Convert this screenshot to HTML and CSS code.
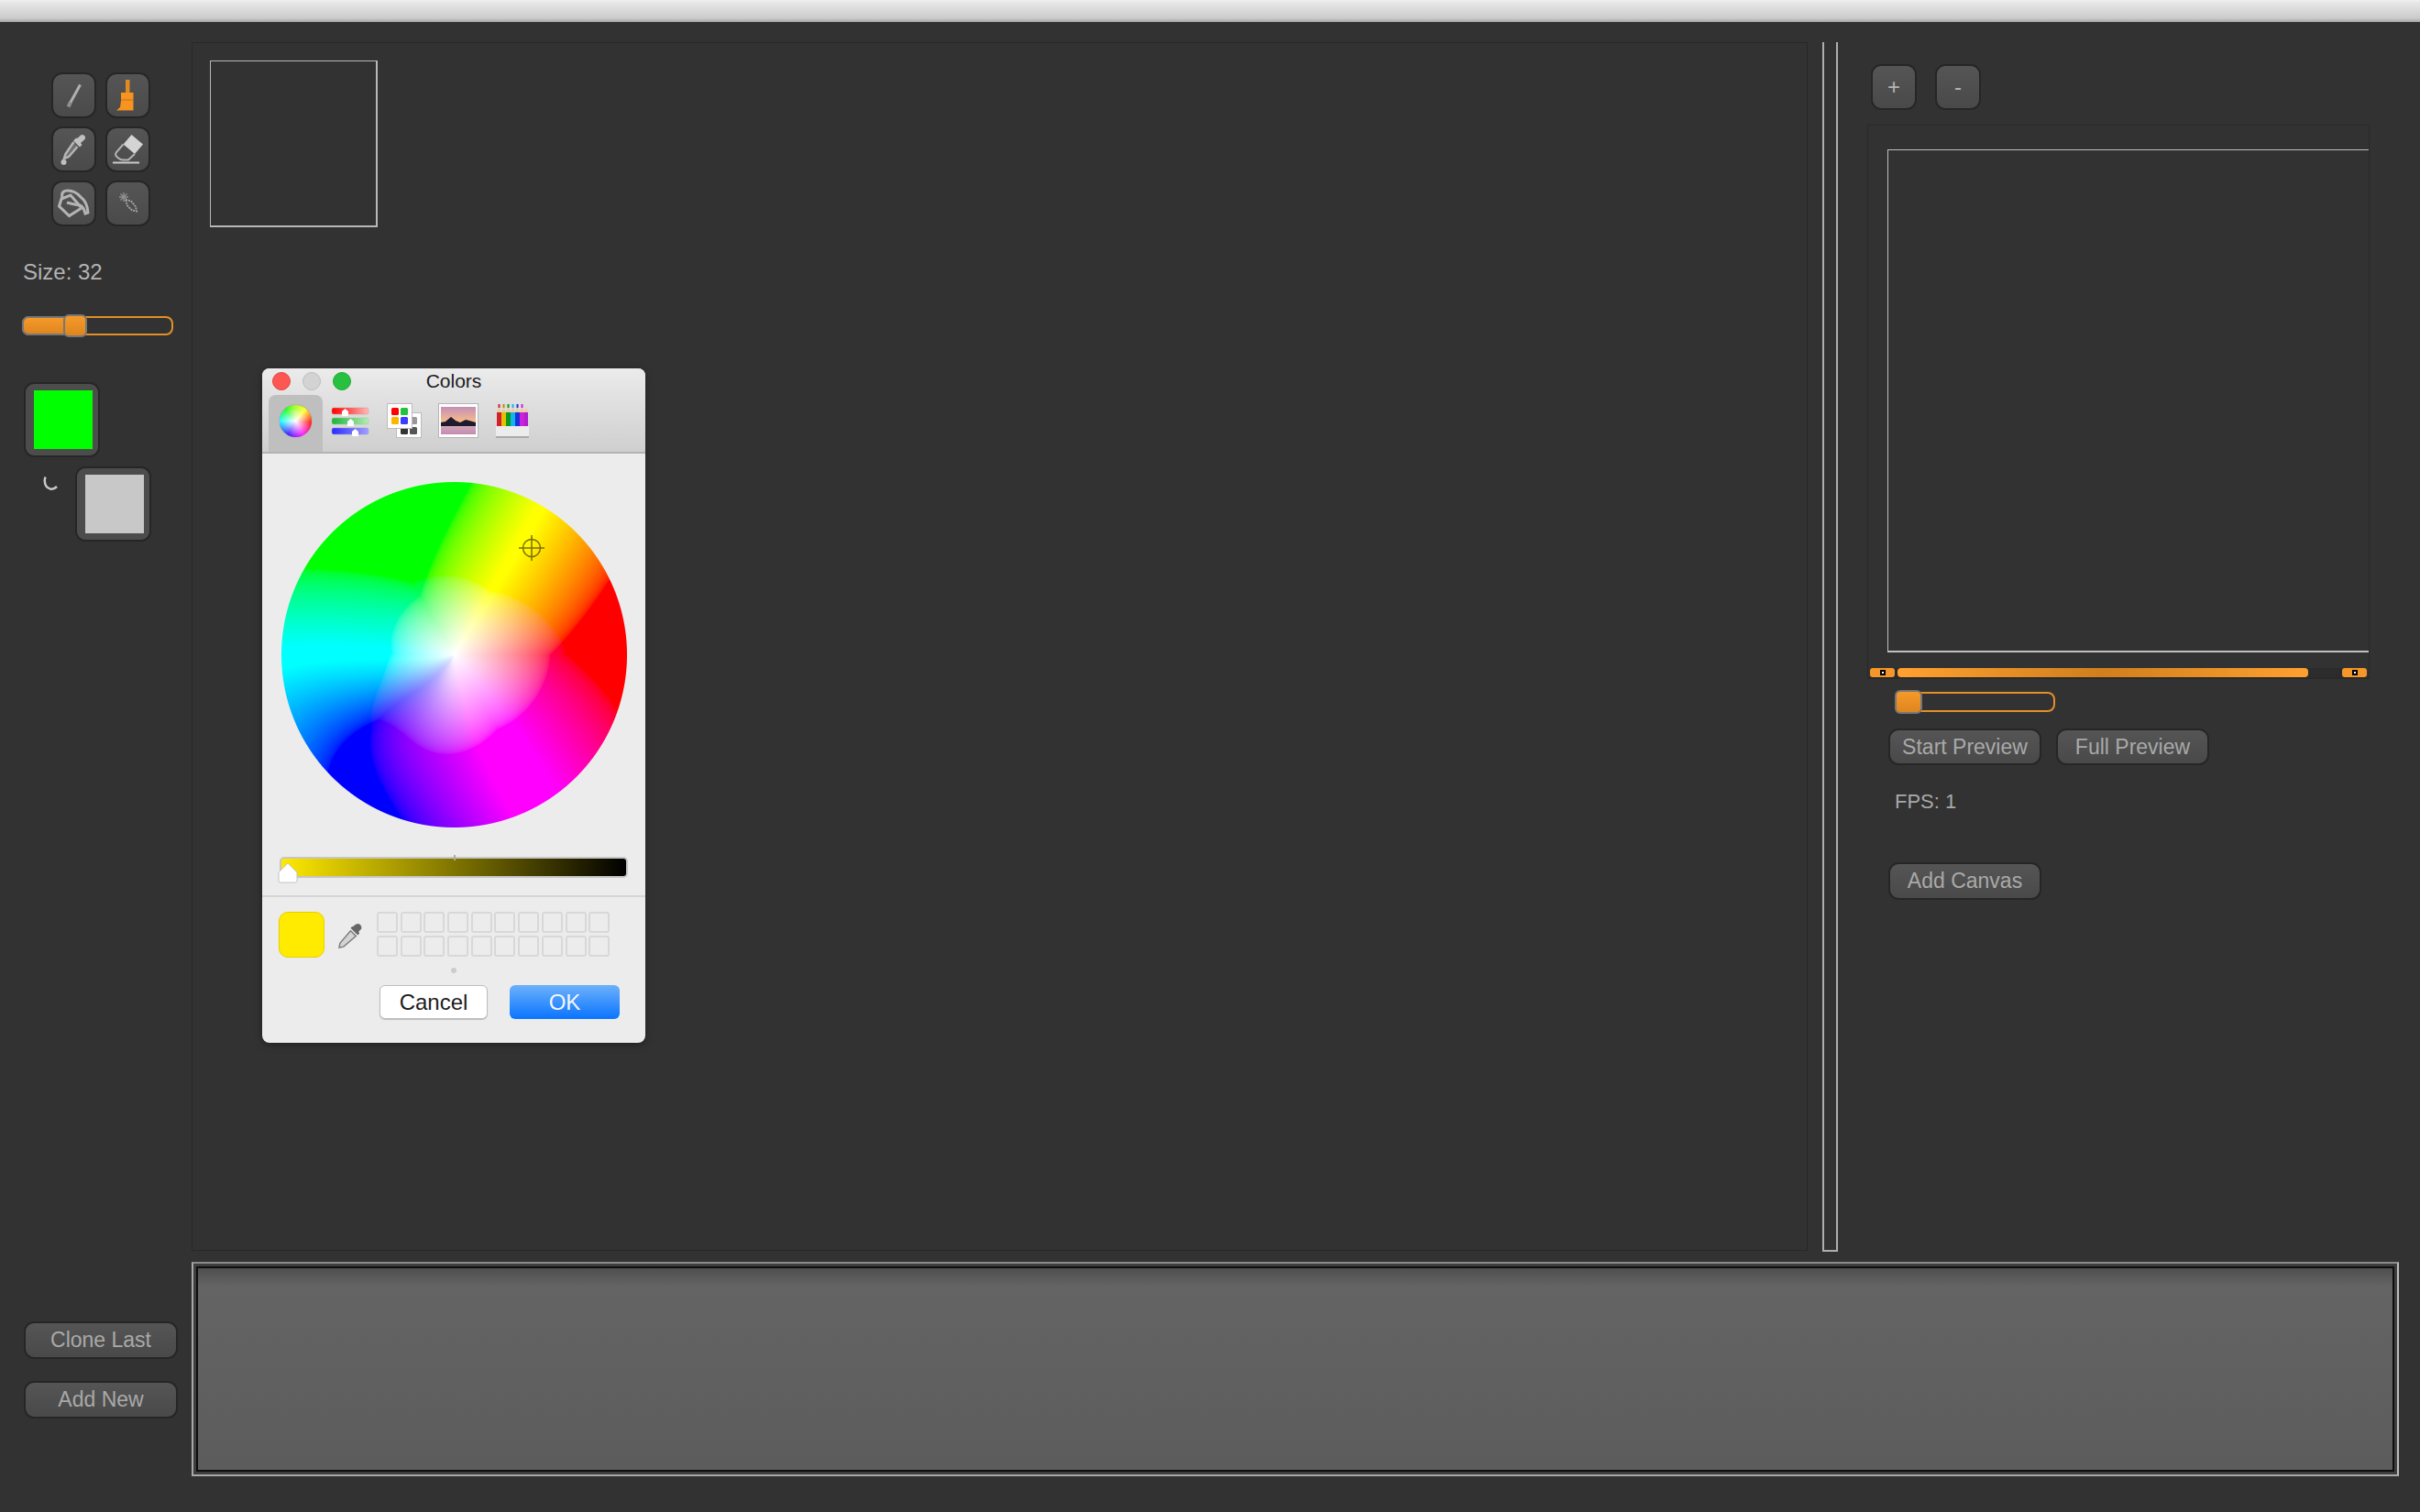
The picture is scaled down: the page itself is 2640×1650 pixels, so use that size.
FILE: index.html
```html
<!DOCTYPE html>
<html lang="en">
<head>
  <meta charset="UTF-8">
  <title>Sprite Editor</title>
  <link rel="stylesheet" href="styles.css">
</head>
<body>

  <div class="titlebar"></div>

  <div class="workspace">

    <aside class="sidebar">
      <div class="tools">
        <button class="tool">
          <svg viewBox="0 0 49 50"><path d="M31.500 13.500 20.500 33.500" stroke="#b0b0b0" stroke-width="3" fill="none"/><path d="M21 32.500 18.500 37.500" stroke="#8e8e8e" stroke-width="4" fill="none"/></svg>
        </button>
        <button class="tool">
          <svg viewBox="0 0 49 50"><path d="M22 8h4.500v14H22z" fill="#e08a24"/><path d="M17 22h13.500v9H17z" fill="#f7931e"/><path d="M17 31h13.500v10.500H12l4-3.500z" fill="#f7931e"/><path d="M17 30h13.500" stroke="#b87420" stroke-width="1"/></svg>
        </button>
        <button class="tool">
          <svg viewBox="0 0 49 50"><path d="M29 12.500 32 9.500q3-1.500 4.500 1t-1 4.500L32 18l1.500 2-2.500 2.500-7-7 2.500-2.500z" fill="#c0c0c0"/><path d="M24.500 17 15.500 30l-1.500 5 5-2L28.500 22" fill="#6e6e6e" stroke="#b4b4b4" stroke-width="2.600"/><circle cx="13.500" cy="39" r="3" fill="#c0c0c0"/></svg>
        </button>
        <button class="tool">
          <svg viewBox="0 0 49 50"><path d="M28.500 9 41 19.500 32 30 19.500 19.500z" fill="#d4d4d4"/><path d="M19.500 19.500 12 28q-2 3 .500 5l1.500 1.500q2.500 2 5 2h6L32 30" stroke="#b4b4b4" stroke-width="2" fill="none"/><path d="M8 39.500h29" stroke="#cacaca" stroke-width="2"/></svg>
        </button>
        <button class="tool">
          <svg viewBox="0 0 49 50"><path d="M11 20 8.500 28l11 10.500L33 30 21 16z" stroke="#b4b4b4" stroke-width="3" fill="none"/><path d="M12 19q-2-8 6-8t14 7q7 5 8 17l-3 1q-2-8-6-9-7-1-14-3" stroke="#b4b4b4" stroke-width="3" fill="none"/></svg>
        </button>
        <button class="tool">
          <svg viewBox="0 0 49 50"><path d="M20 13v10M15 18h10M16.500 14.500l7 7M23.500 14.500l-7 7" stroke="#8e8e8e" stroke-width="1.400"/><path d="M22 21l6 1.500 5 6 1 5-5-1-5-5z" stroke="#a8a8a8" stroke-width="1.800" stroke-dasharray="2 1" fill="none"/></svg>
        </button>
      </div>

      <p class="size-label">Size: 32</p>

      <div class="slider size-slider">
        <span class="slider-fill size-fill"></span>
        <span class="slider-thumb"></span>
      </div>

      <div class="swatch swatch-main"><span class="swatch-color color-green"></span></div>

      <div class="swatch-row">
        <svg class="swap-icon" viewBox="0 0 18 18"><path d="M3.500 2.500C1.500 7 3 14 9 15.500c2.500.5 5-.5 7-2.500" stroke="#c8c8c8" stroke-width="2.500" fill="none"/></svg>
        <div class="swatch"><span class="swatch-color color-gray"></span></div>
      </div>
    </aside>

    <main class="canvas-panel">
      <div class="thumb-frame"></div>
    </main>

    <div class="splitter"></div>

    <section class="preview-pane">
      <div class="zoom-btns">
        <button class="btn btn-square">+</button>
        <button class="btn btn-square">-</button>
      </div>

      <div class="preview-box">
        <div class="preview-canvas"></div>
        <div class="scrollbar">
          <span class="scroll-arrow"><i class="scroll-dot"></i></span>
          <span class="scroll-track"><span class="scroll-thumb"></span></span>
          <span class="scroll-arrow"><i class="scroll-dot"></i></span>
        </div>
      </div>

      <div class="slider fps-slider">
        <span class="slider-thumb fps-thumb"></span>
      </div>

      <div class="preview-btns">
        <button class="btn btn-wide">Start Preview</button>
        <button class="btn btn-wide">Full Preview</button>
      </div>

      <p class="fps-label">FPS: 1</p>

      <button class="btn btn-wide add-canvas">Add Canvas</button>
    </section>

    <div class="frame-btns">
      <button class="btn btn-wide">Clone Last</button>
      <button class="btn btn-wide">Add New</button>
    </div>

    <div class="timeline">
      <div class="timeline-inner"></div>
    </div>

  </div>

  <!-- Colors window floats over the canvas -->
  <div class="colors">
    <div class="colors-head">
      <div class="colors-title">
        <div class="lights">
          <span class="light light-red"></span>
          <span class="light light-gray"></span>
          <span class="light light-green"></span>
        </div>
        <span class="colors-name">Colors</span>
      </div>
      <div class="colors-tabs">
        <div class="colors-tab active"><span class="mini-wheel"></span></div>
        <div class="colors-tab">
          <svg width="42" height="34" viewBox="0 0 42 34">
            <defs>
              <linearGradient id="tr"><stop offset="0" stop-color="#f00"/><stop offset=".4" stop-color="#f44"/><stop offset="1" stop-color="#fbb"/></linearGradient>
              <linearGradient id="tg"><stop offset="0" stop-color="#1db33c"/><stop offset="1" stop-color="#b5ecb5"/></linearGradient>
              <linearGradient id="tb"><stop offset="0" stop-color="#2a2aff"/><stop offset="1" stop-color="#a0a0ff"/></linearGradient>
            </defs>
            <rect x="1" y="3" width="40" height="7" rx="2" fill="url(#tr)" stroke="#c98" stroke-width=".5"/>
            <rect x="1" y="14" width="40" height="7" rx="2" fill="url(#tg)" stroke="#9c9" stroke-width=".5"/>
            <rect x="1" y="25" width="40" height="7" rx="2" fill="url(#tb)" stroke="#99c" stroke-width=".5"/>
            <path d="M12 11V7l3.500-3L19 7v4q0 1-1 1h-5q-1 0-1-1z" fill="#fff"/>
            <path d="M18 22v-4l3.500-3 3.500 3v4q0 1-1 1h-5q-1 0-1-1z" fill="#fff"/>
            <path d="M23 33v-4l3.500-3 3.500 3v4q0 1-1 1h-5q-1 0-1-1z" fill="#fff"/>
          </svg>
        </div>
        <div class="colors-tab">
          <svg width="38" height="38" viewBox="0 0 38 38">
            <rect x="10.500" y="10.500" width="27" height="27" fill="#fff" stroke="#bbb"/>
            <rect x="25" y="15" width="8" height="8" rx="1.500" fill="#999"/>
            <rect x="15" y="26" width="8" height="8" rx="1.500" fill="#333"/>
            <rect x="25" y="26" width="8" height="8" rx="1.500" fill="#555"/>
            <rect x=".5" y=".5" width="27" height="27" fill="#fff" stroke="#bbb"/>
            <rect x="5" y="5" width="8" height="8" rx="1.500" fill="#f00"/>
            <rect x="15" y="5" width="8" height="8" rx="1.500" fill="#1fc33c"/>
            <rect x="5" y="15" width="8" height="8" rx="1.500" fill="#ffb400"/>
            <rect x="15" y="15" width="8" height="8" rx="1.500" fill="#3c3cff"/>
          </svg>
        </div>
        <div class="colors-tab">
          <svg width="44" height="38" viewBox="0 0 44 38">
            <defs>
              <linearGradient id="sky" x2="0" y2="1"><stop offset="0" stop-color="#c48fb8"/><stop offset="1" stop-color="#f8be88"/></linearGradient>
              <linearGradient id="lake" x2="0" y2="1"><stop offset="0" stop-color="#d0a8bc"/><stop offset="1" stop-color="#c48aad"/></linearGradient>
            </defs>
            <rect x=".5" y=".5" width="43" height="37" fill="#fff" stroke="#b5b5b5"/>
            <rect x="3" y="4" width="38" height="17" fill="url(#sky)"/>
            <rect x="3" y="25" width="38" height="9" fill="url(#lake)"/>
            <path d="M3 21l5-1 6-5 5 4 5 2 6-3 4 1 7 2v4H3z" fill="#1f1a2e"/>
          </svg>
        </div>
        <div class="colors-tab">
          <svg width="36" height="38" viewBox="0 0 36 38">
            <path d="M1 10 3.500 4 6 10z" fill="#eccba0"/>
            <path d="M6 10 8.500 4 11 10z" fill="#eccba0"/>
            <path d="M11 10 13.500 4 16 10z" fill="#eccba0"/>
            <path d="M16 10 18.500 4 21 10z" fill="#eccba0"/>
            <path d="M21 10 23.500 4 26 10z" fill="#eccba0"/>
            <path d="M26 10 28.500 4 31 10z" fill="#eccba0"/>
            <path d="M31 10 33 4 35 10z" fill="#eccba0"/>
            <rect x="2.500" y="1" width="2" height="4" fill="#d22030"/>
            <rect x="7.500" y="1" width="2" height="4" fill="#b89000"/>
            <rect x="12.500" y="1" width="2" height="4" fill="#0a9a20"/>
            <rect x="17.500" y="1" width="2" height="4" fill="#14b4e8"/>
            <rect x="22.500" y="1" width="2" height="4" fill="#1a30e0"/>
            <rect x="27.500" y="1" width="2" height="4" fill="#d020d8"/>
            <rect x="1" y="10" width="5" height="16" fill="#d22030"/>
            <rect x="6" y="10" width="5" height="16" fill="#e4c000"/>
            <rect x="11" y="10" width="5" height="16" fill="#0a9a20"/>
            <rect x="16" y="10" width="5" height="16" fill="#14b4e8"/>
            <rect x="21" y="10" width="5" height="16" fill="#1a30e0"/>
            <rect x="26" y="10" width="5" height="16" fill="#d020d8"/>
            <rect x="31" y="10" width="4" height="16" fill="#b020d0"/>
            <rect x="0" y="25" width="36" height="11" fill="#ececec"/>
            <rect x="0" y="36" width="36" height="2" fill="#aaa"/>
          </svg>
        </div>
      </div>
    </div>

    <div class="wheel">
      <canvas id="wheelCanvas" class="wheel-canvas" width="377" height="377"></canvas>
      <svg class="wheel-cross" viewBox="0 0 28 28">
        <circle cx="14" cy="14" r="9.500" stroke="#7a7000" stroke-width="1.500" fill="none"/>
        <path d="M14 0v28M0 14h28" stroke="#7a7000" stroke-width="1.500"/>
      </svg>
    </div>

    <div class="brightness">
      <span class="brightness-tick"></span>
      <svg class="brightness-thumb" viewBox="0 0 22 23"><path d="M1 11 11 1l10 10v9q0 2-2 2H3q-2 0-2-2z" fill="#fff" stroke="#c4c4c4"/></svg>
    </div>

    <div class="colors-divider"></div>

    <div class="wells-row">
      <span class="current-color"></span>
      <svg class="dropper" viewBox="0 0 30 30">
        <path d="M18 4q4-4 7-2.500t2 5.500l-3 3 1 2-2 2-8-8 2-2 1 1z" fill="#666"/>
        <path d="M15 9 3 23l-1 5 5-1 14-12z" fill="#d4d4d4" stroke="#7d7d7d" stroke-width="1.500"/>
      </svg>
      <div class="wells" id="wells"></div>
    </div>

    <span class="wells-dot"></span>

    <div class="colors-actions">
      <button class="mac-btn mac-cancel">Cancel</button>
      <button class="mac-btn mac-ok">OK</button>
    </div>
  </div>

  <script>
    // twenty empty favourite wells
    var wells = document.getElementById('wells');
    for (var i = 0; i < 20; i++) {
      var well = document.createElement('span');
      well.className = 'well';
      wells.appendChild(well);
    }

    // color wheel: hsv disc pushed through a wide gamut matrix, so pure hues clip into flat areas
    var M = [[1.55, -0.50, -0.05], [-0.20, 1.28, -0.08], [-0.11, -0.31, 1.42]];
    var ctx = document.getElementById('wheelCanvas').getContext('2d');
    var img = ctx.createImageData(377, 377);
    var R = 188.5;

    function toDisplay(v) {
      return 255 * Math.pow(Math.min(1, Math.max(0, v)), 1 / 2.2);
    }

    for (var y = 0; y < 377; y++) {
      for (var x = 0; x < 377; x++) {
        var dx = x + 0.5 - R, dy = y + 0.5 - R;
        var d = Math.sqrt(dx * dx + dy * dy);
        var s = Math.min(1, d / R);
        var h = (Math.atan2(-dy, dx) * 180 / Math.PI + 360) % 360;
        // the blue side stays saturated further in than the matrix gives
        var off = (h - 225) / 32;
        var bell = Math.exp(-off * off);
        h += 20 * Math.sin(Math.PI * s) * bell;
        s = Math.pow(s, 1 - 0.35 * bell);
        var rgb = [5, 3, 1].map(function(n) {
          var k = (n + h / 60) % 6;
          var c = 1 - s * Math.max(0, Math.min(k, 4 - k, 1));
          return Math.pow(c, 2.2);
        });
        var p = (y * 377 + x) * 4;
        for (var c = 0; c < 3; c++) {
          img.data[p + c] = toDisplay(M[c][0] * rgb[0] + M[c][1] * rgb[1] + M[c][2] * rgb[2]);
        }
        img.data[p + 3] = 255 * Math.min(1, Math.max(0, R - d + 0.5));
      }
    }
    ctx.putImageData(img, 0, 0);
  </script>

</body>
</html>
```

FILE: styles.css
```css
* { box-sizing: border-box; }
html, body { margin: 0; height: 100%; }
body { background: #323232; color: #a9a9a9; font-family: "Liberation Sans", Arial, sans-serif; overflow: hidden; position: relative; }
p { margin: 0; }
button { font-family: inherit; padding: 0; cursor: pointer; }

.titlebar { height: 24px; background: linear-gradient(#f0f0f0, #e6e6e6 15%, #cbcbcb 82%, #a8a8a8); }

.workspace { display: grid; grid-template-columns: 209px 1763px 65px 603px; grid-template-rows: 1319px 234px; row-gap: 12px; padding-top: 22px; }

/* left column */
.sidebar { padding: 33px 0 0 24px; }
.tools { display: grid; grid-template-columns: 49px 49px; grid-auto-rows: 50px; column-gap: 10px; row-gap: 9px; margin-left: 32px; }
.tool { border: 2px solid #262626; border-radius: 12px; background: linear-gradient(#555, #4a4a4a); display: flex; }
.tool svg { display: block; width: 49px; height: 50px; margin: -2px; flex: none; filter: blur(0.6px); }

.size-label { margin: 36px 0 0 1px; font-size: 24px; line-height: 28px; color: #b4b4b4; }

.slider { position: relative; border: 2px solid #e58f27; border-radius: 8px; height: 21px; }
.size-slider { width: 165px; margin-top: 34px; }
.slider-fill { position: absolute; left: -2px; top: -2px; bottom: -2px; background: linear-gradient(#f59a28, #de8520); border: 2px solid #777; border-right: 0; border-radius: 7px 0 0 7px; }
.size-fill { width: 50px; }
.slider-thumb { position: absolute; left: 43px; top: -4px; width: 26px; height: 25px; border: 2px solid #777; border-radius: 6px; background: linear-gradient(#f59a28, #de8520); }

.swatch { width: 83px; height: 82px; background: #4c4c4c; border: 2px solid #262626; border-radius: 11px; padding: 7px 0 0 9px; }
.swatch-main { margin: 51px 0 0 2px; }
.swatch-color { display: block; width: 64px; height: 64px; }
.color-green { background: #00ff00; }
.color-gray { background: #c8c8c8; }
.swatch-row { display: flex; align-items: flex-start; margin: 10px 0 0 22px; gap: 18px; }
.swap-icon { width: 18px; height: 18px; margin-top: 9px; filter: blur(0.4px); }

/* center */
.canvas-panel { border: 1px solid #282828; background: #323232; padding: 19px 0 0 19px; }
.thumb-frame { width: 183px; height: 182px; border: 2px solid #b8b8b8; border-width: 1px 2px 2px 1px; }

.splitter { margin: 0 0 -1px 16px; width: 17px; border: 2px solid #aeaeae; border-top: 0; }

/* right column */
.preview-pane { padding-top: 24px; }
.zoom-btns { display: flex; gap: 20px; margin-left: 4px; }

.btn { border: 2px solid #262626; border-radius: 11px; background: linear-gradient(#555, #494949); color: #a9a9a9; font-size: 23px; }
.btn-square { width: 50px; height: 50px; font-size: 24px; color: #b4b4b4; }
.btn-wide { width: 167px; height: 41px; }

.preview-box { width: 548px; height: 605px; margin-top: 16px; border: 1px solid #292929; border-bottom-width: 2px; padding: 26px 0 0 21px; display: flex; flex-direction: column; }
.preview-canvas { flex: none; height: 549px; border: solid #c0c0c0; border-width: 1px 0 2px 1px; }
.scrollbar { display: flex; gap: 3px; height: 10px; margin: 17px 2px 0 -19px; background: #2a2a2a; }
.scroll-arrow { width: 27px; background: #f5962a; border-radius: 3px; display: flex; align-items: center; justify-content: center; }
.scroll-dot { display: block; width: 6px; height: 6px; background: #fff; border: 2px solid #000; }
.scroll-track { flex: 1; background: #2c2c2c; border-radius: 4px; }
.scroll-thumb { display: block; width: 448px; height: 100%; border-radius: 4px; background: linear-gradient(90deg, #ffa030, #d07f1c 50%, #ffa030); }

.fps-slider { width: 175px; height: 22px; margin: 14px 0 0 30px; }
.fps-thumb { left: -2px; top: -4px; width: 30px; height: 26px; }

.preview-btns { display: flex; gap: 16px; margin: 18px 0 0 23px; }
.preview-btns .btn-wide { height: 40px; }
.fps-label { margin: 26px 0 0 30px; font-size: 22px; line-height: 28px; color: #a9a9a9; }
.add-canvas { margin: 52px 0 0 23px; }

/* bottom row */
.frame-btns { display: flex; flex-direction: column; gap: 24px; padding: 65px 0 0 26px; }
.frame-btns .btn-wide { width: 168px; }

.timeline { grid-column: 2 / span 3; width: 2408px; border: 2px solid #a8a8a8; border-top-color: #8a8a8a; border-right-color: #bcbcbc; padding: 3px; background: #3e3e3e; }
.timeline-inner { height: 100%; border: 2px solid #0e0e0e; background: linear-gradient(#4f4f4f, #646464 9%, #5c5c5c); }

/* Colors window */
.colors { position: absolute; left: 286px; top: 402px; width: 418px; height: 736px; background: #ececec; border-radius: 8px; box-shadow: 0 2px 8px rgba(0,0,0,0.35); color: #1c1c1c; overflow: hidden; }
.colors-head { height: 93px; background: linear-gradient(#ebebeb, #cfcfcf); border-bottom: 2px solid #b3b3b3; }
.colors-title { position: relative; height: 29px; text-align: center; }
.lights { display: flex; gap: 13px; position: absolute; left: 11px; top: 4px; }
.light { width: 20px; height: 20px; border-radius: 50%; }
.light-red { background: #fc5753; border: 1px solid #e4453f; }
.light-gray { background: #d3d3d3; border: 1px solid #bdbdbd; }
.light-green { background: #28c13f; border: 1px solid #20a935; }
.colors-name { font-size: 21px; line-height: 28px; }

.colors-tabs { display: flex; padding-left: 7px; }
.colors-tab { width: 59px; height: 62px; display: flex; align-items: center; justify-content: center; padding-bottom: 6px; }
.colors-tab.active { background: #bfbfbf; border-radius: 8px 8px 0 0; }
.mini-wheel { width: 35px; height: 35px; border-radius: 50%; background: radial-gradient(circle, #fff, rgba(255,255,255,0.1) 70%), conic-gradient(#9f0, #ff0 40deg, #f00 95deg, #f0f 150deg, #20f 210deg, #0ff 270deg, #0f0 320deg, #9f0); box-shadow: 0 0 1px #666; }

.wheel { position: relative; width: 377px; height: 377px; margin: 31px 0 0 21px; }
.wheel-canvas { display: block; }
.wheel-cross { position: absolute; left: 259px; top: 58px; width: 28px; height: 28px; }

.brightness { position: relative; width: 380px; height: 23px; margin: 32px 0 0 19px; border: 2px solid #c6c6c6; border-radius: 5px; background: linear-gradient(90deg, #ffe900, #000); }
.brightness-tick { position: absolute; left: 188px; top: -4px; width: 2px; height: 6px; background: #aaa; }
.brightness-thumb { position: absolute; left: -4px; top: 4px; width: 22px; height: 23px; }

.colors-divider { height: 2px; margin-top: 19px; background: #d5d5d5; }

.wells-row { display: flex; gap: 14px; padding: 16px 0 0 18px; }
.current-color { width: 50px; height: 50px; background: #ffeb00; border: 1px solid #e6cf00; border-radius: 10px; }
.dropper { width: 29px; height: 29px; margin-top: 12px; }
.wells { display: grid; grid-template-columns: repeat(10, 23px); grid-auto-rows: 23px; column-gap: 2.700px; row-gap: 3px; }
.well { border: 2px solid #d8d8d8; border-radius: 3px; }

.wells-dot { display: block; width: 6px; height: 6px; margin: 11px auto 0; border-radius: 50%; background: #ccc; }

.colors-actions { display: flex; justify-content: flex-end; gap: 24px; padding-right: 28px; margin-top: 13px; }
.mac-btn { height: 37px; font-size: 24px; border-radius: 6px; }
.mac-cancel { width: 118px; background: #fff; border: 1px solid #bdbdbd; color: #1c1c1c; box-shadow: 0 1px 1px rgba(0,0,0,0.2); }
.mac-ok { width: 120px; border: 0; background: linear-gradient(#6cb1fb, #0a74ff); color: #f2f6ff; }
```
